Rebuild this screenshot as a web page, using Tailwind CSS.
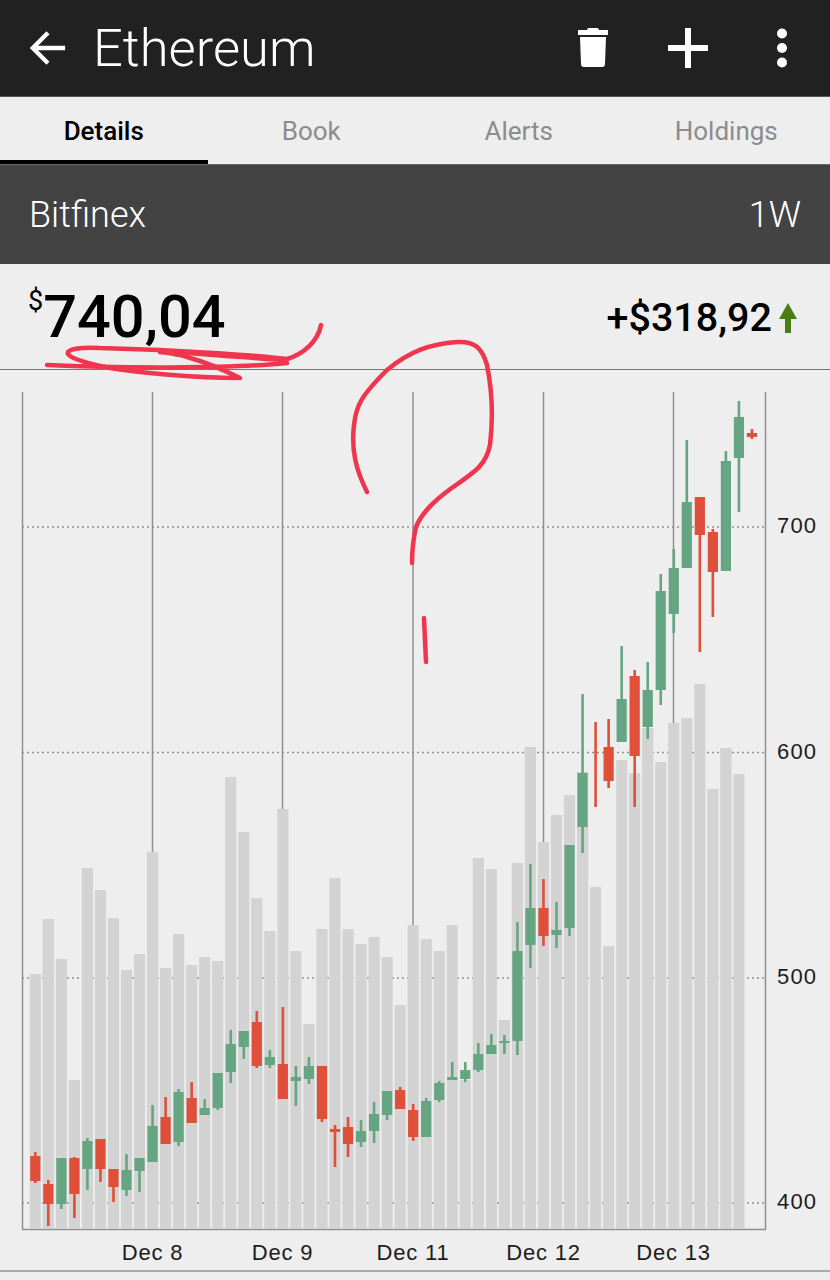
<!DOCTYPE html>
<html lang="en">
<head>
    <meta charset="UTF-8">
    <script src="https://cdn.jsdelivr.net/npm/@tailwindcss/browser@4"></script>
    <title>Ethereum</title>
</head>
<body class="bg-[#eeeeee] font-[Roboto,sans-serif]">
<div class="relative w-[830px] h-[1280px] overflow-hidden">
    <!-- app bar -->
    <header class="h-[97px] bg-[#212121] flex items-center text-white border-b border-[#555]">
        <svg class="ml-[29px] w-[38px] h-[38px]" viewBox="0 0 40 40" fill="none" stroke="white" stroke-width="4.5">
            <path d="M38 20 H6 M20 4 L4 20 L20 36"/>
        </svg>
        <h1 class="ml-[26px] text-[52.5px] font-light leading-none">Ethereum</h1>
        <div class="ml-auto flex items-center">
            <svg class="w-[30px] h-[40px]" viewBox="0 0 30 40" fill="white">
                <path d="M9 2 Q9 0 11 0 H19 Q21 0 21 2 H30 V7 H0 V2 Z"/>
                <path d="M2 9 H28 L27 36 Q27 39 24 39 H6 Q3 39 3 36 Z"/>
            </svg>
            <svg class="ml-[60px] w-[40px] h-[40px]" viewBox="0 0 40 40" fill="white">
                <path d="M17 0 H23 V17 H40 V23 H23 V40 H17 V23 H0 V17 H17 Z"/>
            </svg>
            <svg class="ml-[68px] mr-[42px] w-[12px] h-[40px]" viewBox="0 0 12 40" fill="white">
                <circle cx="6" cy="5.5" r="5"/>
                <circle cx="6" cy="20" r="5"/>
                <circle cx="6" cy="34.5" r="5"/>
            </svg>
        </div>
    </header>

    <!-- tabs -->
    <nav class="h-[67px] grid grid-cols-4 text-[26px] text-center text-[#8c8c8c]">
        <div class="pt-[15px] font-medium text-black border-b-4 border-black">Details</div>
        <div class="pt-[15px]">Book</div>
        <div class="pt-[15px]">Alerts</div>
        <div class="pt-[15px]">Holdings</div>
    </nav>

    <!-- exchange bar -->
    <div class="h-[100px] bg-[#434343] border-t border-[#666] flex items-center justify-between pl-[29px] pr-[29px] text-white text-[36px] font-light">
        <span>Bitfinex</span>
        <span>1W</span>
    </div>

    <!-- price row -->
    <div class="h-[106px] border-b border-[#777] flex items-start justify-between pl-[28px] pr-[33px]">
        <div class="flex items-start mt-[15px] text-black">
            <span class="text-[27px] leading-none mt-[9px]">$</span>
            <span class="text-[59.5px] font-medium leading-[76px]">740,04</span>
        </div>
        <div class="flex items-center mt-[34px]">
            <span class="text-[39.5px] font-medium leading-none text-black">+$318,92</span>
            <svg class="ml-[7px] w-[18px] h-[30px]" viewBox="0 0 18 30" fill="#4a7d12">
                <path d="M9 0 L18 16 H12 V30 H6 V16 H0 Z"/>
            </svg>
        </div>
    </div>

    <!-- chart -->
    <svg id="chart" class="block w-[830px] h-[900px] font-['Liberation_Sans',sans-serif]" viewBox="0 370 830 900"></svg>
    <div class="h-[2px] bg-[#aaaaaa]"></div>

    <!-- hand drawn marks over the screenshot -->
    <svg class="absolute inset-0 w-[830px] h-[1280px] pointer-events-none" viewBox="0 0 830 1280" fill="none" stroke="#f0364f" stroke-width="4.5" stroke-linecap="round" stroke-linejoin="round">
        <path d="M321 325 C318 341 304 354 287 359 C262 356 190 350 100 348 C80 347 66 349 68 354 C72 360 95 365 110 368 C135 372 190 378 240 378 C228 372 205 362 187 357 C178 354 168 353 160 352"/>
        <path d="M47 365 C110 368 230 369 287 363"/>
        <path d="M160 351 C200 354 250 358 285 360"/>
        <path d="M367 492 C356 470 351 450 354 425 C356 405 362 395 387 370 C410 351 430 344 457 342 C475 341 482 348 487 365 C492 390 493 420 490 445 C486 465 475 472 453 487 C435 500 422 512 416 527 C413 540 412 552 412 563"/>
        <path d="M424 618 L426 662"/>
    </svg>
</div>

<script>
// [wick top, body top, body bottom, wick bottom, red?]
const candles = [
    [1152,1156,1181,1183,1],[1180,1184,1204,1226,1],[1158,1158,1204,1209,0],[1157,1158,1194,1218,1],
    [1138,1141,1169,1190,0],[1139,1139,1169,1182,1],[1169,1169,1187,1202,1],[1154,1170,1190,1196,0],
    [1158,1158,1171,1192,0],[1105,1126,1162,1162,0],[1097,1117,1144,1144,1],[1089,1092,1142,1146,0],
    [1082,1098,1123,1123,1],[1099,1108,1115,1115,0],[1073,1073,1108,1110,0],[1030,1044,1072,1083,0],
    [1031,1031,1047,1059,0],[1011,1022,1066,1068,1],[1050,1057,1065,1068,0],[1007,1064,1099,1099,1],
    [1066,1077,1081,1106,0],[1057,1066,1079,1084,0],[1066,1066,1119,1122,1],[1125,1129,1132,1167,1],
    [1117,1127,1144,1157,1],[1120,1131,1142,1147,0],[1102,1114,1131,1143,0],[1091,1091,1115,1120,0],
    [1087,1090,1109,1109,1],[1104,1110,1137,1141,1],[1098,1101,1137,1137,0],[1081,1083,1100,1102,0],
    [1062,1077,1080,1080,0],[1062,1070,1079,1082,0],[1043,1054,1070,1072,0],[1034,1045,1054,1054,0],
    [1035,1041,1043,1054,0],[922,951,1041,1055,0],[864,908,945,968,0],[879,908,936,946,1],
    [902,930,935,948,0],[845,845,928,936,0],[694,773,827,853,0],[722,722,722,807,1],
    [719,747,781,788,1],[646,699,742,742,0],[670,676,756,807,1],[662,690,727,739,0],
    [574,591,690,705,0],[549,568,614,633,0],[440,502,568,568,0],[497,497,535,652,1],
    [529,532,572,617,1],[451,461,571,571,0],[401,417,458,512,0],[429,433,437,439,1]
];
const volumeTops = [
    974,919,959,1080,868,890,918,970,954,852,968,934,965,957,961,777,832,898,931,809,
    951,1024,929,878,929,944,937,957,1005,925,939,951,925,1080,858,869,1020,863,747,842,
    815,795,772,887,946,760,773,728,762,723,718,684,789,748,774
];

const svgParts = [];
const baseline = 1229;
const stepX = 13.03;
const startX = 35.3;

// grid
[22.5,152.5,282.5,413,543.5,673.5,765.5].forEach(x => {
    svgParts.push(`<line x1="${x}" x2="${x}" y1="392" y2="${baseline}" stroke="#909090" stroke-width="1.5"/>`);
});
[[527,'700'],[752.5,'600'],[978,'500'],[1203,'400']].forEach(([y, label]) => {
    svgParts.push(`<line x1="22" x2="765" y1="${y}" y2="${y}" stroke="#909090" stroke-width="1.4" stroke-dasharray="2 3"/>`);
    svgParts.push(`<text x="777" y="${y + 6}" font-size="22" letter-spacing="1.2" fill="#1c1c1c">${label}</text>`);
});
svgParts.push(`<line x1="22" x2="766" y1="${baseline + .5}" y2="${baseline + .5}" stroke="#909090" stroke-width="1.5"/>`);
[[152.5,'Dec 8'],[282.5,'Dec 9'],[413,'Dec 11'],[543.5,'Dec 12'],[673.5,'Dec 13']].forEach(([x, label]) => {
    svgParts.push(`<text x="${x}" y="1260" text-anchor="middle" font-size="22" letter-spacing=".8" fill="#1c1c1c">${label}</text>`);
});

// volume bars
volumeTops.forEach((top, i) => {
    const x = startX + stepX * i;
    svgParts.push(`<rect x="${x - 5.6}" y="${top}" width="11.2" height="${baseline - top}" fill="#d3d3d3"/>`);
});

// candles
candles.forEach(([wickTop, bodyTop, bodyBottom, wickBottom, red], i) => {
    const x = startX + stepX * i;
    const color = red ? '#e04f39' : '#66a582';
    svgParts.push(`<rect x="${x - 1.3}" y="${wickTop}" width="2.6" height="${wickBottom - wickTop}" fill="${color}"/>`);
    if (bodyBottom > bodyTop) {
        svgParts.push(`<rect x="${x - 5.1}" y="${bodyTop}" width="10.2" height="${bodyBottom - bodyTop}" fill="${color}"/>`);
    }
});

document.getElementById('chart').innerHTML = svgParts.join('');
</script>
</body>
</html>
